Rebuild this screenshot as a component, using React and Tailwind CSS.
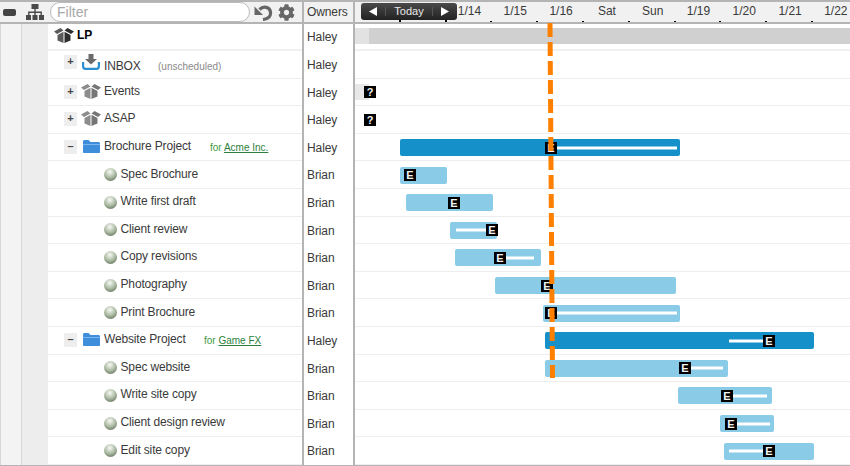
import { FaCog } from 'react-icons/fa';

const rows = [
  { name: 'INBOX', kind: 'inbox', owner: 'Haley', toggle: '+', note: '(unscheduled)' },
  { name: 'Events', kind: 'box', owner: 'Haley', toggle: '+', stub: true, markers: [{ x: 15, t: '?' }] },
  { name: 'ASAP', kind: 'box', owner: 'Haley', toggle: '+', markers: [{ x: 15, t: '?' }] },
  { name: 'Brochure Project', kind: 'folder', owner: 'Haley', toggle: '-', client: 'Acme Inc.', forW: 'w-[106px]', dark: true, bar: [45, 280], line: [196, 126], markers: [{ x: 196, t: 'E' }] },
  { name: 'Spec Brochure', owner: 'Brian', bar: [45, 47], markers: [{ x: 55, t: 'E' }] },
  { name: 'Write first draft', owner: 'Brian', bar: [51, 87], markers: [{ x: 99, t: 'E' }] },
  { name: 'Client review', owner: 'Brian', bar: [95, 47], line: [101, 36], markers: [{ x: 137, t: 'E' }] },
  { name: 'Copy revisions', owner: 'Brian', bar: [100, 86], line: [145, 34], markers: [{ x: 145, t: 'E' }] },
  { name: 'Photography', owner: 'Brian', bar: [140, 181], markers: [{ x: 192, t: 'E' }] },
  { name: 'Print Brochure', owner: 'Brian', bar: [188, 137], line: [196, 126], markers: [{ x: 196, t: 'E' }] },
  { name: 'Website Project', kind: 'folder', owner: 'Haley', toggle: '-', client: 'Game FX', forW: 'w-[100px]', dark: true, bar: [190, 269], line: [374, 40], markers: [{ x: 414, t: 'E' }] },
  { name: 'Spec website', owner: 'Brian', bar: [190, 183], line: [330, 38], markers: [{ x: 330, t: 'E' }] },
  { name: 'Write site copy', owner: 'Brian', bar: [323, 94], line: [372, 40], markers: [{ x: 372, t: 'E' }] },
  { name: 'Client design review', owner: 'Brian', bar: [365, 54], line: [376, 39], markers: [{ x: 376, t: 'E' }] },
  { name: 'Edit site copy', owner: 'Brian', bar: [369, 90], line: [374, 40], markers: [{ x: 414, t: 'E' }] },
];

const days = ['', '', '1/14', '1/15', '1/16', 'Sat', 'Sun', '1/19', '1/20', '1/21', '1/22'];

function BoxIcon({ left, right }) {
  return (
    <svg width="20" height="15" viewBox="0 0 20 15">
      <path d="M0 3.500 6.500 0l3 2.500L3 6z" fill={left} />
      <path d="M20 3.500 13.500 0l-3 2.500L17 6z" fill={right} />
      <path d="M3.500 7 9.500 3.800V15l-6-2.500z" fill={left} />
      <path d="M16.500 7 10.500 3.800V15l6-2.500z" fill={right} />
    </svg>
  );
}

function SitemapIcon() {
  return (
    <svg width="18" height="16" viewBox="0 0 18 16" className="ml-[10px]">
      <path d="M5.500 0h7v5h-7zM8.300 5h1.400v2.500h6.200V11h-1.400V9H9.700v2H8.300V9H3.500v2H2.100V7.500h6.200z" fill="#4a4a4a" />
      <path d="M0 11h5v5H0zM6.500 11h5v5h-5zM13 11h5v5h-5z" fill="#4a4a4a" />
    </svg>
  );
}

function UndoIcon() {
  return (
    <svg width="19" height="17" viewBox="0 0 19 17" className="ml-[4px]">
      <path d="M9 15.500C14.500 15 17 12 16.500 8 15.800 3 9.500 1.500 5.500 5.500" fill="none" stroke="#666" strokeWidth="3.200" />
      <path d="M0.500 2.500v8.500h8.500z" fill="#666" />
    </svg>
  );
}

function InboxIcon() {
  return (
    <svg width="18" height="16" viewBox="0 0 18 16">
      <path d="M6.500 0h5v5H15l-6 5.500L3 5h3.500z" fill="#6b6b6b" />
      <path d="M1.100 8v4.300c0 1.500 1 2.500 2.400 2.500h11c1.400 0 2.400-1 2.400-2.500V8" fill="none" stroke="#2b8fd0" strokeWidth="2.200" />
    </svg>
  );
}

function FolderIcon() {
  return (
    <svg width="17" height="13" viewBox="0 0 17 13">
      <path d="M0 1.500C0 .6.600 0 1.500 0h4l2 2h8c.9 0 1.500.6 1.500 1.500V12c0 .6-.4 1-1 1H1c-.6 0-1-.4-1-1z" fill="#3f8edb" />
      <path d="M0 4h17v1H0z" fill="#7db6ee" />
    </svg>
  );
}

function Marker({ x, t }) {
  return (
    <div
      className="absolute top-1/2 -translate-x-1/2 -translate-y-1/2 w-[12px] h-[12px] bg-black text-[#f4f4f4] text-[11px] leading-[12px] font-bold text-center"
      style={{ left: x }}
    >
      {t}
    </div>
  );
}

function GanttRow({ row }) {
  const color = row.dark ? 'bg-[#1590c8]' : 'bg-[#8acbe8]';
  return (
    <div className="relative flex-1 flex items-center shadow-[inset_0_-1px_0_#eeeeee]">
      {row.stub && <div className="w-[14px] h-[16px] bg-[#e8e8e8]" />}
      {row.bar && (
        <div
          className={`h-[17px] rounded-[2px] ${color}`}
          style={{ marginLeft: row.bar[0], width: row.bar[1] }}
        />
      )}
      {row.line && (
        <div
          className="absolute top-1/2 -translate-y-1/2 h-[3px] bg-white"
          style={{ left: row.line[0], width: row.line[1] }}
        />
      )}
      {row.markers && row.markers.map((m, i) => <Marker key={i} x={m.x} t={m.t} />)}
    </div>
  );
}

function TreeLabel({ row }) {
  if (!row.kind) {
    return (
      <div className="flex items-center pl-[56px]">
        <div className="w-[13px] h-[13px] rounded-full bg-[radial-gradient(circle_at_45%_30%,#f8faf5,#a9b8a0_50%,#4c5945)]" />
        <span className="ml-[3.5px] -mt-[2px] tracking-[-0.15px]">{row.name}</span>
      </div>
    );
  }
  const inbox = row.kind === 'inbox';
  return (
    <div className="flex items-center pl-[16px]">
      <div className={`w-[13px] h-[14px] bg-[#eeeeee] text-[#444] text-[11px] leading-[13px] font-bold text-center ${inbox ? '-mt-[4px]' : ''}`}>
        {row.toggle === '-' ? '–' : '+'}
      </div>
      <div className={`w-[22px] ml-[3px] mr-[2px] flex justify-center ${inbox ? '-mt-[5px]' : '-mt-[1px]'}`}>
        {inbox && <InboxIcon />}
        {row.kind === 'box' && <BoxIcon left="#8c8c8c" right="#767676" />}
        {row.kind === 'folder' && <FolderIcon />}
      </div>
      <span className={`tracking-[-0.15px] ${row.forW || 'w-[54px]'} ${inbox ? 'mt-[4px]' : '-mt-[2px]'}`}>{row.name}</span>
      {row.note && <span className="text-[10px] text-[#8a8a8a] mt-[4px]">{row.note}</span>}
      {row.client && (
        <span className="text-[10px] text-[#3f9a3f] whitespace-nowrap">
          for <span className="underline text-[#2c7f3c]">{row.client}</span>
        </span>
      )}
    </div>
  );
}

export default function App() {
  return (
    <div className="relative w-[850px] h-[466px] overflow-hidden bg-white text-[12px] text-[#3a3a3a] font-['Liberation_Sans',Arial,sans-serif]">
      {/* header */}
      <div className="flex h-[24px] bg-[#f1f1f1] border-t-2 border-b-2 border-[#b4b4b4]">
        <div className="w-[302px] flex items-center shrink-0">
          <div className="w-[13px] h-[7px] ml-[3px] rounded-[2px] bg-[#444]" />
          <SitemapIcon />
          <input
            placeholder="Filter"
            className="ml-[6px] w-[200px] h-[20px] px-[6px] rounded-full border border-[#bbbbbb] bg-white text-[14px] outline-none placeholder:text-[#a8a8a8]"
          />
          <UndoIcon />
          <FaCog className="ml-[5px] text-[17px] text-[#666]" />
        </div>
        <div className="w-[53px] shrink-0 border-l-2 border-r-2 border-[#b4b4b4] pl-[3px] leading-[20px] tracking-[-0.1px]">Owners</div>
        <div className="flex-1 flex overflow-hidden">
          {days.map((d, i) => (
            <div key={i} className="w-[45.8px] shrink-0 flex flex-col">
              <div className="flex-1 text-center leading-[19px]">{d}</div>
              <div className="self-end w-[2px] h-[3px] bg-black" />
            </div>
          ))}
        </div>
      </div>

      {/* today / arrows control, sits over the timeline */}
      <div className="absolute left-[361px] top-[3px] w-[96px] h-[17px] flex items-center rounded-[3px] bg-gradient-to-b from-[#4a4a4a] to-[#222222] text-[#e8e8e8] text-[11px]">
        <div className="w-[25px] flex justify-center border-r border-[#555]">
          <svg width="8" height="9" viewBox="0 0 8 9"><path d="M8 0v9L0 4.500z" fill="#fff" /></svg>
        </div>
        <div className="flex-1 text-center">Today</div>
        <div className="w-[25px] flex justify-center border-l border-[#555]">
          <svg width="8" height="9" viewBox="0 0 8 9"><path d="M0 0v9l8-4.500z" fill="#fff" /></svg>
        </div>
      </div>

      {/* body */}
      <div className="flex h-[442px] border-b border-[#b4b4b4]">
        <div className="w-[22px] shrink-0 bg-[#f3f3f3] border-l border-r border-[#d8d8d8]" />
        <div className="w-[26px] shrink-0 bg-[#ededed]" />
        <div className="flex-1 flex flex-col min-w-0">
          <div className="flex h-[27px] shrink-0 items-stretch">
            <div className="w-[254px] shrink-0 flex items-center pl-[6px] border-b-2 border-[#f0f0f0]">
              <div className="-mt-[2px]"><BoxIcon left="#5a5a5a" right="#2e2e2e" /></div>
              <span className="ml-[3px] -mt-[4px] font-bold text-black">LP</span>
            </div>
            <div className="w-[53px] shrink-0 border-l-2 border-r-2 border-[#b4b4b4] pl-[3px] leading-[26px] tracking-[-0.1px]">Haley</div>
            <div className="flex-1 flex items-start pt-[4px] border-b-2 border-[#f0f0f0]">
              <div className="w-[14px] h-[16px] bg-[#e2e2e2]" />
              <div className="flex-1 h-[16px] bg-[#d0d0d0]" />
            </div>
          </div>
          {rows.map((row) => (
            <div key={row.name} className="flex h-[27.6px] shrink-0 items-stretch">
              <div className="w-[254px] shrink-0 flex items-center border-b border-[#eeeeee]">
                <TreeLabel row={row} />
              </div>
              <div className="w-[53px] shrink-0 border-l-2 border-r-2 border-[#b4b4b4] pl-[3px] leading-[28px] tracking-[-0.1px]">{row.owner}</div>
              <GanttRow row={row} />
            </div>
          ))}
        </div>
      </div>

      {/* today line */}
      <svg className="absolute left-0 top-0 pointer-events-none" width="850" height="466">
        <line x1="550" y1="23" x2="552.5" y2="378" stroke="#ff8000" strokeWidth="5" strokeDasharray="14 5" />
      </svg>
    </div>
  );
}
